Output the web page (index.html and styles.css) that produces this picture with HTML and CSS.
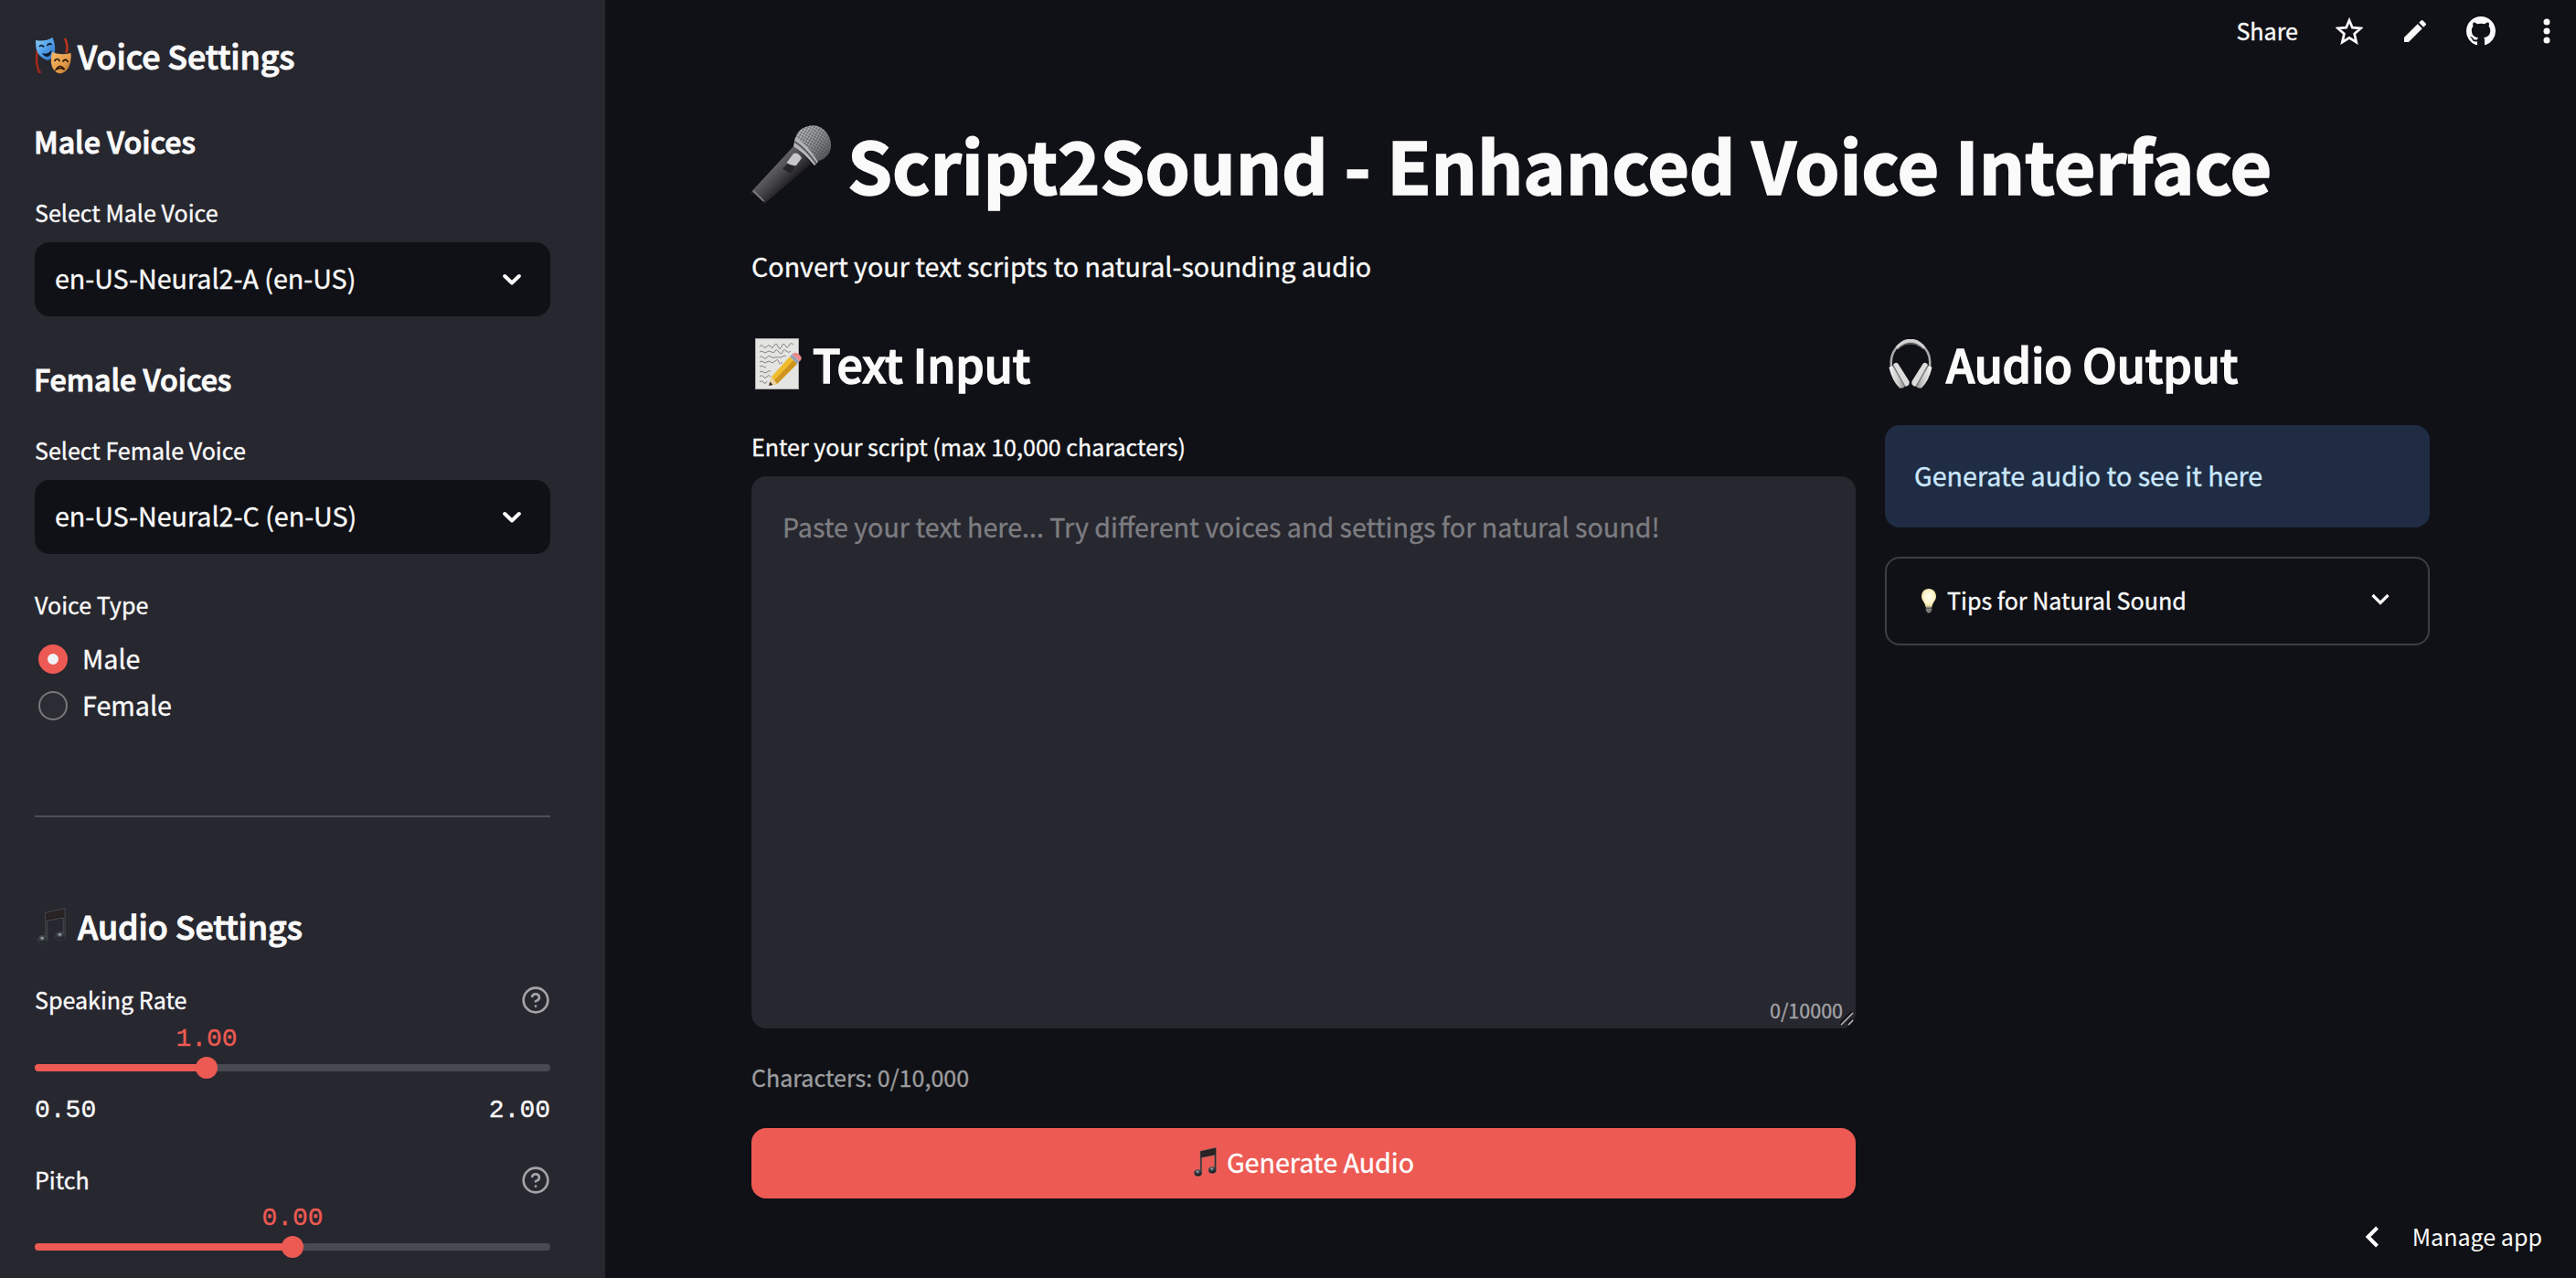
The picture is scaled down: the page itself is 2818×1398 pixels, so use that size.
FILE: index.html
```html
<!DOCTYPE html>
<html lang="en">
<head>
<meta charset="utf-8">
<title>Script2Sound - Enhanced Voice Interface</title>
<link rel="stylesheet" href="styles.css">
</head>
<body>
<svg class="defs" aria-hidden="true">
  <defs>
    <linearGradient id="blueMask" x1="0" y1="0" x2="1" y2="1"><stop offset="0" stop-color="#8fd0fb"/><stop offset=".5" stop-color="#4f9fe6"/><stop offset="1" stop-color="#2a6fc0"/></linearGradient>
    <linearGradient id="goldMask" x1="0" y1="0" x2="1" y2="1"><stop offset="0" stop-color="#f6b967"/><stop offset=".6" stop-color="#e39a48"/><stop offset="1" stop-color="#a5672a"/></linearGradient>
    <linearGradient id="micBody" x1=".2" y1=".2" x2=".8" y2=".8"><stop offset=".2" stop-color="#6a6a6c"/><stop offset=".5" stop-color="#454547"/><stop offset=".8" stop-color="#161618"/></linearGradient>
    <linearGradient id="micHead" x1="0" y1="0" x2="1" y2="1"><stop offset="0" stop-color="#c9cacc"/><stop offset=".5" stop-color="#97989b"/><stop offset="1" stop-color="#4b4c50"/></linearGradient>
    <pattern id="mesh" width="3" height="3" patternUnits="userSpaceOnUse" patternTransform="rotate(30)"><path d="M0 0H3M0 0V3" stroke="#2f3033" stroke-width="1.200"/></pattern>
    <linearGradient id="cup" x1="0" y1="0" x2="1" y2="0"><stop offset="0" stop-color="#f4f4f4"/><stop offset=".6" stop-color="#c9c9c9"/><stop offset="1" stop-color="#8c8c8c"/></linearGradient>
    <radialGradient id="bulb" cx=".5" cy=".45" r=".6"><stop offset="0" stop-color="#fffef2"/><stop offset=".6" stop-color="#fbf3c8"/><stop offset="1" stop-color="#e0c87c"/></radialGradient>
    <radialGradient id="noteHead" cx=".45" cy=".3" r=".7"><stop offset="0" stop-color="#b9c0c6"/><stop offset=".35" stop-color="#3c4248"/><stop offset="1" stop-color="#0d0f12"/></radialGradient>
    <symbol id="notes" viewBox="0 0 32 41">
      <path d="M9 5.500L31 .5V32.500H29.200V11L11 14.500V36H9.200Z" fill="#221f20" stroke="#5d6166" stroke-width=".7"/>
      <path d="M10 6.500L30.300 2V8.500L10 13Z" fill="#2b2223"/>
      <ellipse cx="5.800" cy="36" rx="5.300" ry="4.600" fill="url(#noteHead)" stroke="#59656e" stroke-width=".5"/>
      <ellipse cx="25.800" cy="32" rx="5.300" ry="4.600" fill="url(#noteHead)" stroke="#59656e" stroke-width=".5"/>
    </symbol>
    <symbol id="chevron" viewBox="0 0 20 14"><path d="M2.200 3L10 10.500L17.800 3" fill="none" stroke="#fafafa" stroke-width="4" stroke-linecap="round" stroke-linejoin="round"/></symbol>
    <symbol id="help" viewBox="0 0 24 24"><g fill="none" stroke="#a3a3a8" stroke-width="2" stroke-linecap="round" stroke-linejoin="round"><circle cx="12" cy="12" r="10"/><path d="M9.090 9a3 3 0 0 1 5.830 1c0 2-3 3-3 3"/><path d="M12 17h.01"/></g></symbol>
  </defs>
</svg>
<div class="app">
  <aside class="sidebar">
    <h3 class="section">
      <svg class="emoji-masks" viewBox="0 0 40 41">
        <path d="M3 15Q1 25 3 33T6 38" fill="none" stroke="#a52a1a" stroke-width="2.600"/>
        <path d="M33 2Q37 10 34.500 18" fill="none" stroke="#b8341d" stroke-width="2.600"/>
        <path d="M1 4Q11 6 19.500 1Q23 9 22 17Q20 25 14 26Q4 23 1.500 13Z" fill="url(#blueMask)"/>
        <path d="M5 11Q7.500 8 10 11.500M13.500 10Q16 6.500 18.500 9" fill="none" stroke="#101a2c" stroke-width="1.800"/>
        <path d="M8 18Q14 20.500 18.500 14.500Q18 22 13.500 22Q10 22 8 18Z" fill="#101a2c"/>
        <path d="M19 17Q29 21 39.500 18Q40.500 27 37 34Q33 40 27 40.500Q19 38 18 29Q17.500 22 19 17Z" fill="url(#goldMask)"/>
        <path d="M21.500 27Q24.500 22 27.500 27M30.500 27.500Q34 23 36.500 28M23.500 36Q27.500 29 32.500 36Q28 33.500 23.500 36Z" fill="none" stroke="#2b1609" stroke-width="1.700"/>
      </svg>
      <span>Voice Settings</span>
    </h3>
    <h4 class="group group-male">Male Voices</h4>
    <div class="label label-select">Select Male Voice</div>
    <div class="select"><span>en-US-Neural2-A (en-US)</span><svg class="chevron"><use href="#chevron"/></svg></div>
    <h4 class="group group-female">Female Voices</h4>
    <div class="label label-select">Select Female Voice</div>
    <div class="select"><span>en-US-Neural2-C (en-US)</span><svg class="chevron"><use href="#chevron"/></svg></div>
    <div class="label label-radio">Voice Type</div>
    <div class="radios">
      <div class="radio"><span class="dot dot-on"></span><span>Male</span></div>
      <div class="radio"><span class="dot"></span><span>Female</span></div>
    </div>
    <hr class="divider">
    <h3 class="section section-audio"><svg class="emoji-notes"><use href="#notes"/></svg><span>Audio Settings</span></h3>
    <div class="label label-row label-rate"><span>Speaking Rate</span><svg class="help"><use href="#help"/></svg></div>
    <div class="slider" style="--pos:33.333%">
      <div class="value">1.00</div>
      <div class="track"><span class="knob"></span></div>
      <div class="ticks"><span>0.50</span><span>2.00</span></div>
    </div>
    <div class="label label-row label-pitch"><span>Pitch</span><svg class="help"><use href="#help"/></svg></div>
    <div class="slider" style="--pos:50%">
      <div class="value">0.00</div>
      <div class="track"><span class="knob"></span></div>
    </div>
  </aside>
  <main class="main">
    <header class="toolbar">
      <span class="share">Share</span>
      <svg class="icon-star" viewBox="0 0 30 30"><path d="M15 3.200L18.400 11.200L27.500 12L20.600 18.100L22.700 27.200L15 22.400L7.300 27.200L9.400 18.100L2.500 12L11.600 11.200Z" fill="none" stroke="#fafafa" stroke-width="2.700"/></svg>
      <svg class="icon-pencil" viewBox="3 3 18 18"><path d="M3 17.250V21h3.750L17.810 9.940l-3.750-3.750L3 17.250zM20.710 7.040a1 1 0 0 0 0-1.410l-2.340-2.340a1 1 0 0 0-1.410 0l-1.830 1.830 3.750 3.750 1.830-1.830z" fill="#fafafa"/></svg>
      <svg class="icon-github" viewBox="0 0 16 16"><path fill="#fafafa" d="M8 0C3.580 0 0 3.580 0 8c0 3.540 2.290 6.530 5.470 7.590.4.070.55-.17.55-.38 0-.19-.01-.82-.01-1.490-2.010.37-2.530-.49-2.690-.94-.09-.23-.48-.94-.82-1.130-.28-.15-.68-.52-.01-.53.63-.01 1.080.58 1.230.82.72 1.210 1.870.87 2.330.66.07-.52.28-.87.51-1.070-1.780-.2-3.640-.89-3.640-3.950 0-.87.31-1.590.82-2.150-.08-.2-.36-1.020.08-2.120 0 0 .67-.21 2.200.82.64-.18 1.320-.27 2-.27s1.360.09 2 .27c1.530-1.040 2.200-.82 2.200-.82.44 1.100.16 1.920.08 2.120.51.56.82 1.270.82 2.150 0 3.070-1.870 3.750-3.650 3.950.29.25.54.73.54 1.480 0 1.070-.01 1.930-.01 2.200 0 .21.15.46.55.38A8.010 8.010 0 0 0 16 8c0-4.420-3.580-8-8-8z"/></svg>
      <svg class="icon-dots" viewBox="0 0 8 28"><g fill="#fafafa"><circle cx="4" cy="4" r="3.500"/><circle cx="4" cy="14" r="3.500"/><circle cx="4" cy="24" r="3.500"/></g></svg>
    </header>
    <div class="content">
      <h1 class="title">
        <svg class="emoji-mic" viewBox="0 0 87 86">
          <path d="M47 22L66 42L15 85Q11 87 6 82L1 76Q0 73 1.500 71Z" fill="url(#micBody)"/>
          <path d="M1 73L14 85Q10 87 5 82L1 77Z" fill="#111113"/>
          <path d="M2 71.500L13.500 83" stroke="#88898c" stroke-width="1.200"/>
          <path d="M50 33L54 36.500L43 53L34 47.500Z" fill="#262628"/>
          <path d="M46 31Q51 29 55 36L49 44Q44 45 38.500 41Z" fill="#c8c8ca"/>
          <path d="M48 18Q48 5 62 1Q75-2 83 9Q91 22 84 32Q79 38 73 39Z" fill="url(#micHead)"/>
          <path d="M48 18Q48 5 62 1Q75-2 83 9Q91 22 84 32Q79 38 73 39Z" fill="url(#mesh)" opacity=".75"/>
          <path d="M48 13Q61 21 73 40L69 44Q57 30 46 23Z" fill="#b4b5b8"/>
          <path d="M47.500 18Q60 26 71 42" fill="none" stroke="#55565a" stroke-width="2"/>
        </svg>
        <span>Script2Sound - Enhanced Voice Interface</span>
      </h1>
      <p class="subtitle">Convert your text scripts to natural-sounding audio</p>
      <div class="columns">
        <section class="col-input">
          <h2 class="heading">
            <svg class="emoji-memo" viewBox="0 0 52 56">
              <rect x=".5" y=".5" width="47" height="55" fill="#e4e4e2" stroke="#a9aaa8"/>
              <path d="M5 9q2-3 4 0t4 0t4 0t4-1t4 1t4 0t4-1t4 0t5-1M5 15q2-2 4 0t4 0t5 0t4-1t4 1t4 0t4-1t5 0M5 21q2-3 4 0t4 0t4-1t5 1t4 0t4-1t4 0M5 26q2-2 4 0t4 0t4 0t5-1t4 1t4 0M5 31q2-2 4 0t3 0M5 37q2-2 4 0t4 0t4-1M5 42q2-3 4 0t4 0t4 0M5 48q2-3 4 0t4-1" fill="none" stroke="#777" stroke-width=".9"/>
              <path d="M15 52L18 42L38 20L46 28L24 50Z" fill="#f0bd2f"/>
              <path d="M21 46L42 24L46 28L24 50Z" fill="#cf9420"/>
              <path d="M15 52L18 42L24 50Z" fill="#ecd3a3"/><path d="M15 52L16.300 47.500L19.500 51Z" fill="#333"/>
              <path d="M38 20L40.500 17.500L48.500 25.500L46 28Z" fill="#8fa3b5"/>
              <path d="M40.500 17.500Q44 14 48.500 18T48.500 25.500Z" fill="#e98a8c"/>
            </svg>
            <span>Text Input</span>
          </h2>
          <div class="label label-script">Enter your script (max 10,000 characters)</div>
          <div class="textarea">
            <div class="placeholder">Paste your text here... Try different voices and settings for natural sound!</div>
            <div class="count">0/10000</div>
            <svg class="grip" viewBox="0 0 16 16"><path d="M1 14L14 1M9 14L14 9" stroke="#111" stroke-width="2.600"/><path d="M2 15L15 2M10 15L15 10" stroke="#c9c9cb" stroke-width="1.400"/></svg>
          </div>
          <div class="label characters">Characters: 0/10,000</div>
          <div class="button"><svg class="emoji-notes-small"><use href="#notes"/></svg><span>Generate Audio</span></div>
        </section>
        <section class="col-output">
          <h2 class="heading">
            <svg class="emoji-headphones" viewBox="0 0 48 54">
              <path d="M3 31C1 13 11 3 24 3S47 13 45 31" fill="none" stroke="#a9aaab" stroke-width="2.600"/>
              <path d="M9 10Q15 1.500 24 1.500T39 10" fill="none" stroke="#d2d2d2" stroke-width="3.600"/>
              <path d="M9.500 11Q16 5 24 5T38.500 11" fill="none" stroke="#777" stroke-width="1.200"/>
              <g id="earcup"><path d="M.5 31Q3 28.500 5 29.500L18 51Q17 54 12 53.500Q4 46 .5 31Z" fill="url(#cup)"/><path d="M5 28Q8 24 10.500 27L22.500 46Q23.500 50 20 51.500L17 51.500Z" fill="#dcdcdc"/><path d="M5 29L18 52" stroke="#77787a" stroke-width="1.500"/></g>
              <use href="#earcup" transform="matrix(-1 0 0 1 48 0)"/>
            </svg>
            <span>Audio Output</span>
          </h2>
          <div class="info">Generate audio to see it here</div>
          <div class="expander">
            <svg class="emoji-bulb" viewBox="0 0 16 27"><path d="M8 0C3 0 0 4 0 8.500C0 13 4 15 4.500 20H11.500C12 15 16 13 16 8.500C16 4 13 0 8 0Z" fill="url(#bulb)"/><path d="M4.800 19.500H11.200V24Q8 29 4.800 24Z" fill="#8d8c88"/><path d="M5 21.500H11M5 24H11" stroke="#4c4b49" stroke-width=".8"/></svg>
            <span>Tips for Natural Sound</span>
            <svg class="chevron-thin" viewBox="0 0 20 14"><path d="M1.500 2L10 10.500L18.500 2" fill="none" stroke="#fafafa" stroke-width="3.200"/></svg>
          </div>
        </section>
      </div>
    </div>
    <div class="manage"><svg class="icon-back" viewBox="0 0 16 24"><path d="M13.500 2L3.500 12L13.500 22" fill="none" stroke="#fff" stroke-width="4"/></svg><span>Manage app</span></div>
  </main>
</div>
</body>
</html>
```
FILE: styles.css
```css
* { box-sizing: border-box; }
body {
  margin: 0;
  background: #101116;
  color: #fafafa;
  font-family: "Noto Sans CJK JP", "Noto Sans", sans-serif;
  font-size: 28.65px;
  font-weight: 400;
  -webkit-text-stroke: 0.35px currentColor;
}
h1, h2, h3, h4, p { margin: 0; }
svg { display: block; flex: none; }
.defs { position: absolute; width: 0; height: 0; }
.app { display: flex; width: 2818px; height: 1398px; overflow: hidden; }

.sidebar {
  flex: none;
  width: 662px;
  height: 1398px;
  padding: 36px 60px 0 38px;
  background: #27272f;
  overflow: hidden;
}
.section {
  display: flex;
  align-items: center;
  height: 48px;
  font-size: 35.8px;
  line-height: 48px;
  font-weight: 500;
  letter-spacing: -0.08px;
  -webkit-text-stroke: 1px currentColor;
}
.section-audio { margin-top: 94px; }
.emoji-masks { width: 40px; height: 41px; margin-right: 7px; }
.emoji-notes { width: 31px; height: 40px; margin: 2px 13px 0 3px; }
.group {
  font-size: 32.2px;
  line-height: 44px;
  font-weight: 500;
  letter-spacing: -0.05px;
  text-indent: -1px;
  -webkit-text-stroke: 1px currentColor;
}
.group-male { margin-top: 48px; }
.group-female { margin-top: 46px; }
.label { font-size: 25.07px; line-height: 42px; white-space: nowrap; }
.label-select { margin-top: 35px; }
.label-radio { margin-top: 34px; }
.label-row { display: flex; justify-content: space-between; align-items: center; }
.label-rate { margin-top: 36px; }
.label-pitch { margin-top: 40px; }
.help { width: 32px; height: 32px; margin-top: 2px; }
.select {
  display: flex;
  align-items: center;
  justify-content: space-between;
  height: 81px;
  margin-top: 12px;
  padding: 0 32px 0 22px;
  border-radius: 16px;
  background: #101116;
}
.select span { padding-bottom: 4px; line-height: 40px; }
.chevron { width: 20px; height: 14px; }
.radios { margin-top: 13px; }
.radio {
  display: flex;
  gap: 16px;
  height: 51px;
  padding: 10px 0 0 4px;
  line-height: 29px;
}
.dot {
  width: 32px;
  height: 32px;
  border: 2px solid #77777b;
  border-radius: 50%;
  background: #2c2c35;
}
.dot-on { border: 10px solid #ec5a53; background: #f0f2f6; }
.divider { height: 2px; margin: 95px 0 0; border: 0; background: #4d4e56; }
.slider {
  font-family: "Liberation Mono", monospace;
  font-size: 28px;
  line-height: 29px;
}
.value { width: 68px; margin: 8px 0 0 calc(var(--pos) - 34px); text-align: center; color: #ec5a53; }
.label-pitch + .slider .value { margin-top: 7px; }
.track {
  position: relative;
  height: 8px;
  margin-top: 13px;
  border-radius: 4px;
  background: linear-gradient(to right, #ec5a53 var(--pos), #484a52 var(--pos));
}
.knob {
  position: absolute;
  top: -8px;
  left: calc(var(--pos) - 12px);
  width: 24px;
  height: 24px;
  border-radius: 50%;
  background: #ec5a53;
}
.ticks { display: flex; justify-content: space-between; margin-top: 28px; }

.main { position: relative; flex: 1; }
.toolbar {
  display: flex;
  align-items: center;
  justify-content: flex-end;
  height: 68px;
  padding-right: 28px;
}
.share { margin-right: 41px; padding-bottom: 2px; font-size: 25.07px; line-height: 40px; }
.icon-star { width: 30px; height: 30px; margin-right: 45px; }
.icon-pencil { width: 24px; height: 24px; margin-right: 44px; }
.icon-github { width: 32px; height: 32px; margin-right: 52px; }
.icon-dots { width: 8px; height: 28px; }
.content { width: 1836px; margin: 61px 0 0 160px; }
.title {
  display: flex;
  height: 100px;
  font-size: 78.8px;
  line-height: 100px;
  font-weight: 700;
  letter-spacing: -0.12px;
  white-space: nowrap;
  -webkit-text-stroke: 1.6px currentColor;
}
.emoji-mic { width: 87px; height: 86px; margin: 8px 18px 0 0; }
.subtitle { margin-top: 38px; line-height: 48px; }
.columns { display: flex; gap: 32px; margin-top: 48px; }
.col-input { width: 1208px; }
.col-output { width: 596px; }
.heading {
  display: flex;
  height: 68px;
  font-size: 50.1px;
  line-height: 68px;
  font-weight: 500;
  letter-spacing: -0.15px;
  -webkit-text-stroke: 1.5px currentColor;
}
.emoji-memo { width: 52px; height: 56px; margin: 7px 11px 0 4px; }
.emoji-headphones { width: 48px; height: 54px; margin: 8px 15px 0 4px; }
.label-script { margin-top: 36px; }
.textarea {
  position: relative;
  height: 604px;
  margin-top: 12px;
  padding: 31px 34px;
  border-radius: 16px;
  background: #27272f;
}
.placeholder { color: #7d7d81; line-height: 48px; white-space: nowrap; }
.count {
  position: absolute;
  right: 14px;
  bottom: 2px;
  color: #a3a3a7;
  font-size: 21.5px;
  line-height: 36px;
}
.grip { position: absolute; right: 2px; bottom: 3px; width: 16px; height: 16px; }
.characters { margin-top: 32px; color: #9c9c9f; }
.button {
  display: flex;
  align-items: center;
  justify-content: center;
  height: 77px;
  margin-top: 35px;
  border-radius: 16px;
  background: #ec5a53;
  color: #fff;
}
.button span { padding-bottom: 5px; }
.emoji-notes-small { width: 25px; height: 32px; margin: 0 11px 3px 1px; }
.info {
  height: 112px;
  margin-top: 34px;
  padding: 0 32px 3px;
  border-radius: 16px;
  background: #1f2c43;
  color: #cbe7fc;
  line-height: 109px;
}
.expander {
  display: flex;
  align-items: center;
  height: 97px;
  margin-top: 32px;
  padding: 0 42px 0 38px;
  border: 2px solid #3e3f44;
  border-radius: 16px;
  font-size: 25.07px;
}
.expander span { flex: 1; padding-bottom: 3px; }
.emoji-bulb { width: 16px; height: 27px; margin-right: 12px; }
.chevron-thin { width: 20px; height: 14px; margin-bottom: 3px; }
.manage {
  position: absolute;
  right: 37px;
  bottom: 26px;
  display: flex;
  align-items: center;
  font-size: 25.07px;
  line-height: 40px;
  -webkit-text-stroke: 0;
}
.icon-back { width: 16px; height: 24px; margin: 2px 36px 0 0; }
```
